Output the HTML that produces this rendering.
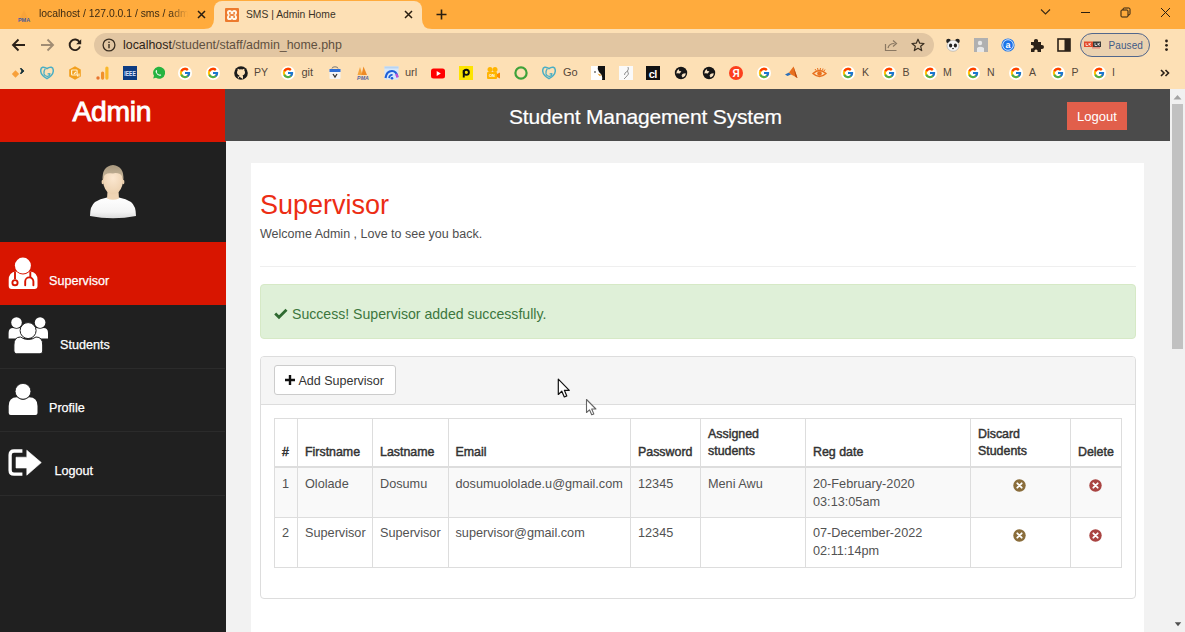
<!DOCTYPE html>
<html><head><meta charset="utf-8">
<style>
*{margin:0;padding:0;box-sizing:border-box}
html,body{width:1185px;height:632px;overflow:hidden;background:#f2f2f2;font-family:"Liberation Sans",sans-serif}
.a{position:absolute}
.t{position:absolute;white-space:nowrap;line-height:1}
#tabs{left:0;top:0;width:1185px;height:29px;background:#ffab3d}
#toolbar{left:0;top:29px;width:1185px;height:60px;background:#fde0b5}
#page{left:0;top:89px;width:1185px;height:543px;background:#f2f2f2}
.th{font-size:12.4px;color:#333;-webkit-text-stroke:0.45px #333}
.td{font-size:12.7px;color:#525252}
</style></head><body>
<!-- ===== browser chrome ===== -->
<div id="tabs" class="a"></div>
<div id="toolbar" class="a"></div>
<!-- active tab -->
<div class="a" style="left:214px;top:1px;width:208px;height:28px;background:#fde0b5;border-radius:8px 8px 0 0"></div>
<svg class="a" style="left:204px;top:19px" width="10" height="10"><path d="M0 10 Q10 10 10 0 L10 10 Z" fill="#fde0b5"/></svg>
<svg class="a" style="left:422px;top:19px" width="10" height="10"><path d="M10 10 Q0 10 0 0 L0 10 Z" fill="#fde0b5"/></svg>

<svg width="0" height="0" style="position:absolute"><defs>
<symbol id="gg" viewBox="0 0 48 48"><circle cx="24" cy="24" r="24" fill="#fff"/><g transform="translate(24 24) scale(0.88) translate(-24 -24)"><path fill="#FFC107" d="M43.611,20.083H42V20H24v8h11.303c-1.649,4.657-6.08,8-11.303,8c-6.627,0-12-5.373-12-12c0-6.627,5.373-12,12-12c3.059,0,5.842,1.154,7.961,3.039l5.657-5.657C34.046,6.053,29.268,4,24,4C12.955,4,4,12.955,4,24c0,11.045,8.955,20,20,20c11.045,0,20-8.955,20-20C44,22.659,43.862,21.35,43.611,20.083z"/><path fill="#FF3D00" d="M6.306,14.691l6.571,4.819C14.655,15.108,18.961,12,24,12c3.059,0,5.842,1.154,7.961,3.039l5.657-5.657C34.046,6.053,29.268,4,24,4C16.318,4,9.656,8.337,6.306,14.691z"/><path fill="#4CAF50" d="M24,44c5.166,0,9.86-1.977,13.409-5.192l-6.19-5.238C29.211,35.091,26.715,36,24,36c-5.202,0-9.619-3.317-11.283-7.946l-6.522,5.025C9.505,39.556,16.227,44,24,44z"/><path fill="#1976D2" d="M43.611,20.083H42V20H24v8h11.303c-0.792,2.237-2.231,4.166-4.087,5.571l6.19,5.238C36.971,39.205,44,34,44,24C44,22.659,43.862,21.35,43.611,20.083z"/></g></symbol>
<symbol id="globe" viewBox="0 0 14 14"><circle cx="7" cy="7" r="6.2" fill="#161616"/><path d="M2.3 7.4Q2.4 4.4 5 3.1L5.2 5L7.4 5.3L5.8 7.6Q4 7.2 2.3 7.4Z" fill="#f6e2c4"/><path d="M11.7 7.2Q11.6 10.4 8.6 11.5L7.4 9.6L8.6 8.9L7.8 8.2Q9.8 7.2 11.7 7.2Z" fill="#f6e2c4"/></symbol>
</defs></svg>
<!-- bookmarks -->
<svg class="a" style="left:11px;top:66px" width="15" height="14" viewBox="0 0 15 14"><path d="M0.8 8L4.5 4.3L8.2 8L4.5 11.7Z" fill="#f7a03a"/><path d="M8.8 2.2L10.2 2L13.2 5L10.2 8L8.8 7.8L10.5 5Z" fill="#16323a"/><path d="M10 2L13.2 5L10 8L11 5Z" fill="#16323a"/></svg>
<svg class="a" style="left:40px;top:66px" width="14" height="14" viewBox="0 0 14 14"><path d="M7 2.6Q9 1 11.3 1.3Q13.4 1.8 13.3 5Q13 9.3 7 12.6Q1 9.3 0.7 5Q0.6 1.8 2.7 1.3Q5 1 7 2.6Z" fill="none" stroke="#4aaec4" stroke-width="1.5"/><path d="M5.3 2.6Q3.3 5.2 4 8Q5 10.8 7.8 10.4Q9.9 10 9.8 7.6L7.6 7.8" fill="none" stroke="#4aaec4" stroke-width="1.3"/></svg>
<svg class="a" style="left:68px;top:66px" width="14" height="14" viewBox="0 0 14 14"><path d="M7 0.3L12.8 3.5V10.5L7 13.7L1.2 10.5V3.5Z" fill="#f29f1e"/><rect x="3.6" y="4" width="5.5" height="5" rx="0.8" fill="none" stroke="#fff3d0" stroke-width="1.2"/><path d="M6 8L8 6M9.5 8.5V10.5M11 7.5V10.5" stroke="#fff3d0" stroke-width="1.1"/></svg>
<svg class="a" style="left:96px;top:66px" width="13" height="14" viewBox="0 0 13 14"><circle cx="2" cy="12" r="1.7" fill="#e8742e"/><rect x="5" y="5.5" width="3.2" height="8.2" rx="1.6" fill="#f0912b"/><rect x="9.3" y="0.5" width="3.2" height="13.2" rx="1.6" fill="#f9b72a"/></svg>
<svg class="a" style="left:123px;top:66px" width="14" height="14" viewBox="0 0 14 14"><rect width="14" height="14" fill="#0e3c82"/><text x="1.3" y="10" font-size="7.5" font-weight="bold" font-family="Liberation Sans" fill="#dfe8ff" textLength="11.5" lengthAdjust="spacingAndGlyphs">IEEE</text></svg>
<svg class="a" style="left:151px;top:66px" width="14" height="14" viewBox="0 0 14 14"><path d="M2.2 12.6L3 9.8A6 6 0 1 1 5 11.8Z" fill="#25b340"/><path d="M5 4.2Q4.3 5 4.8 6.5Q6 9 8.8 9.8Q10 10 10.3 9L9 8.2L8.3 8.8Q6.3 8 5.6 6L6.2 5.3L5.6 4Z" fill="#fff"/></svg>
<svg class="a" style="left:178px;top:66px" width="14" height="14"><use href="#gg"/></svg>
<svg class="a" style="left:206px;top:66px" width="14" height="14"><use href="#gg"/></svg>
<svg class="a" style="left:234px;top:66px" width="14" height="14" viewBox="0 0 14 14"><circle cx="7" cy="7" r="6.8" fill="#1b1b1b"/><path d="M5 13V10.8Q3 10.8 2.8 9.5M9 13V10.5Q9 9.5 8.5 9.2Q11 9 11 6.3Q11 5.3 10.3 4.5Q10.6 3.5 10.2 2.8Q9.3 2.8 8.5 3.5Q7 3 5.5 3.5Q4.7 2.8 3.8 2.8Q3.4 3.5 3.7 4.5Q3 5.3 3 6.3Q3 9 5.5 9.2Q5 9.7 5 10.5" fill="#fde0b5"/></svg>
<div class="t" style="left:254px;top:67px;font-size:10.5px;color:#54473a">PY</div>
<svg class="a" style="left:281px;top:66px" width="14" height="14"><use href="#gg"/></svg>
<div class="t" style="left:301.5px;top:67px;font-size:11px;color:#54473a">git</div>
<svg class="a" style="left:328px;top:66px" width="14" height="14" viewBox="0 0 14 14"><path d="M4 2.5Q4 0.8 7 0.8Q10 0.8 10 2.5" fill="none" stroke="#777" stroke-width="1"/><rect x="1.5" y="3" width="11" height="10" rx="1" fill="#f4f4f4"/><rect x="1.5" y="3" width="11" height="3" fill="#2f6fd6"/><path d="M5 8L7 11L9 8" fill="none" stroke="#333" stroke-width="1.3"/></svg>
<svg class="a" style="left:355px;top:66px" width="16" height="14" viewBox="0 0 16 14"><path d="M5 1L7.5 9H2.5Z" fill="#f5a43d"/><path d="M8.5 0.5L12 9H6.5Z" fill="#ee8a24"/><text x="8" y="13.5" font-size="5.3" font-weight="bold" font-style="italic" font-family="Liberation Sans" fill="#54639c" text-anchor="middle">PMA</text></svg>
<svg class="a" style="left:384px;top:66px" width="15" height="14" viewBox="0 0 15 14"><rect x="0.5" y="0.5" width="14" height="13" fill="#d6e8fb"/><rect x="0.5" y="0.5" width="14" height="2" fill="#b8d4f3"/><path d="M1.5 12Q2.5 5 8 5Q12.5 5 13.5 11" fill="none" stroke="#1e5fd8" stroke-width="2.2"/><path d="M12 8Q13.2 9.5 13.5 11.5" fill="none" stroke="#c44fd6" stroke-width="2.2"/><path d="M5 12Q6 8.5 8.5 9" fill="none" stroke="#1e5fd8" stroke-width="1.8"/><circle cx="8" cy="12.3" r="1.3" fill="#1e5fd8"/></svg>
<div class="t" style="left:405px;top:67px;font-size:11px;color:#54473a">url</div>
<svg class="a" style="left:431px;top:66px" width="14" height="14" viewBox="0 0 14 14"><rect x="0" y="2.5" width="14" height="10" rx="2.5" fill="#f00"/><path d="M5.7 5V10L9.8 7.5Z" fill="#fff"/></svg>
<svg class="a" style="left:459px;top:66px" width="14" height="14" viewBox="0 0 14 14"><rect width="14" height="14" fill="#fde400"/><circle cx="7.3" cy="6.3" r="2.6" fill="none" stroke="#111" stroke-width="1.9"/><rect x="3.8" y="4" width="1.9" height="7.5" fill="#111"/></svg>
<svg class="a" style="left:486px;top:66px" width="14" height="14" viewBox="0 0 14 14"><circle cx="4" cy="3.5" r="2.5" fill="#ffb400"/><circle cx="9" cy="3.5" r="2.5" fill="#ffb400"/><rect x="1" y="6" width="10" height="7" rx="1" fill="#ffb400"/><path d="M11 8L14 6.5V12.5L11 11Z" fill="#ff8a00"/><text x="6" y="11.3" font-size="4" font-family="Liberation Sans" font-weight="bold" fill="#fff" text-anchor="middle">ON</text></svg>
<svg class="a" style="left:514px;top:66px" width="14" height="14" viewBox="0 0 14 14"><circle cx="7" cy="7" r="5.6" fill="none" stroke="#3ea23a" stroke-width="2.2"/></svg>
<svg class="a" style="left:542px;top:66px" width="14" height="14" viewBox="0 0 14 14"><path d="M7 2.6Q9 1 11.3 1.3Q13.4 1.8 13.3 5Q13 9.3 7 12.6Q1 9.3 0.7 5Q0.6 1.8 2.7 1.3Q5 1 7 2.6Z" fill="none" stroke="#4aaec4" stroke-width="1.5"/><path d="M5.3 2.6Q3.3 5.2 4 8Q5 10.8 7.8 10.4Q9.9 10 9.8 7.6L7.6 7.8" fill="none" stroke="#4aaec4" stroke-width="1.3"/></svg>
<div class="t" style="left:563px;top:67px;font-size:11px;color:#54473a">Go</div>
<svg class="a" style="left:591px;top:66px" width="14" height="14" viewBox="0 0 14 14"><rect width="14" height="14" fill="#fff"/><path d="M7 0H14V14H11Q12 9 8 6Q6 3 7 0Z" fill="#111"/><path d="M6.5 7.5L11 9L8.5 10Z" fill="#e8a030"/><circle cx="4" cy="6" r="0.8" fill="#111"/></svg>
<svg class="a" style="left:619px;top:66px" width="14" height="14" viewBox="0 0 14 14"><rect width="14" height="14" fill="#fafafa"/><path d="M9 1Q10 3 8.5 5L9.5 8L7 11L5 13M8.5 5L6 7L5.5 9" fill="none" stroke="#777" stroke-width="0.8"/></svg>
<svg class="a" style="left:646px;top:66px" width="14" height="14" viewBox="0 0 14 14"><rect width="14" height="14" fill="#111"/><text x="6.8" y="11.5" font-size="11" font-weight="bold" font-family="Liberation Sans" fill="#fff" text-anchor="middle" letter-spacing="-0.5">cl</text></svg>
<svg class="a" style="left:674px;top:66px" width="14" height="14"><use href="#globe"/></svg>
<svg class="a" style="left:702px;top:66px" width="14" height="14"><use href="#globe"/></svg>
<svg class="a" style="left:729px;top:66px" width="14" height="14" viewBox="0 0 14 14"><circle cx="7" cy="7" r="7" fill="#fc3f1d"/><text x="7" y="11" font-size="10" font-weight="bold" font-family="Liberation Sans" fill="#fff" text-anchor="middle">Я</text></svg>
<svg class="a" style="left:757px;top:66px" width="14" height="14"><use href="#gg"/></svg>
<svg class="a" style="left:784px;top:66px" width="14" height="14" viewBox="0 0 14 14"><path d="M1 8.5L5 6.5L7 8.5L3.5 10Z" fill="#2c6fb8"/><path d="M5 6.5L9.5 0.5L13.5 12L10 10L7 8.5Z" fill="#e8701e"/><path d="M9.5 0.5L13.5 12L11.5 11Z" fill="#b84a10"/></svg>
<svg class="a" style="left:812px;top:66px" width="15" height="14" viewBox="0 0 15 14"><path d="M1 7.5Q7.5 1.5 14 7.5Q7.5 13.5 1 7.5Z" fill="none" stroke="#e8701e" stroke-width="1.5"/><circle cx="7.5" cy="7.5" r="2.3" fill="#e8701e"/><path d="M3 3L4 4.5M5.5 2L6 4M8.5 2L8.2 4M11 2.5L10.5 4.2M13 3.5L12 5" stroke="#e8701e" stroke-width="1"/></svg>
<svg class="a" style="left:841px;top:66px" width="14" height="14"><use href="#gg"/></svg>
<div class="t" style="left:862px;top:67px;font-size:10.5px;color:#54473a">K</div>
<svg class="a" style="left:882px;top:66px" width="14" height="14"><use href="#gg"/></svg>
<div class="t" style="left:902.6px;top:67px;font-size:10.5px;color:#54473a">B</div>
<svg class="a" style="left:922.5px;top:66px" width="14" height="14"><use href="#gg"/></svg>
<div class="t" style="left:943px;top:67px;font-size:10.5px;color:#54473a">M</div>
<svg class="a" style="left:966px;top:66px" width="14" height="14"><use href="#gg"/></svg>
<div class="t" style="left:987px;top:67px;font-size:10.5px;color:#54473a">N</div>
<svg class="a" style="left:1008.5px;top:66px" width="14" height="14"><use href="#gg"/></svg>
<div class="t" style="left:1029px;top:67px;font-size:10.5px;color:#54473a">A</div>
<svg class="a" style="left:1050.5px;top:66px" width="14" height="14"><use href="#gg"/></svg>
<div class="t" style="left:1071.4px;top:67px;font-size:10.5px;color:#54473a">P</div>
<svg class="a" style="left:1091.5px;top:66px" width="14" height="14"><use href="#gg"/></svg>
<div class="t" style="left:1112px;top:67px;font-size:10.5px;color:#54473a">I</div>
<svg class="a" style="left:1160px;top:69px" width="10" height="8" viewBox="0 0 10 8"><path d="M1 1L4 4L1 7M5.5 1L8.5 4L5.5 7" fill="none" stroke="#2b2118" stroke-width="1.6"/></svg>
<!-- tab 1 -->
<svg class="a" style="left:16px;top:9px" width="16" height="14" viewBox="0 0 16 14"><path d="M8 1 L12 9 L4 9Z" fill="#f7a23a" opacity="0.8"/><text x="8" y="12.5" font-size="5.5" font-weight="bold" font-family="Liberation Sans" fill="#4a5a9a" text-anchor="middle">PMA</text></svg>
<div class="t" style="left:39px;top:9px;font-size:10.4px;color:#3b2a14;width:152px;overflow:hidden;-webkit-mask-image:linear-gradient(90deg,#000 86%,transparent 98%)">localhost / 127.0.0.1 / sms / admin</div>
<svg class="a" style="left:197px;top:10px" width="9" height="9" viewBox="0 0 9 9"><path d="M1 1L8 8M8 1L1 8" stroke="#2a1e10" stroke-width="1.5"/></svg>
<!-- tab 2 icon -->
<svg class="a" style="left:225px;top:8px" width="14" height="14" viewBox="0 0 14 14"><rect x="0" y="0" width="14" height="14" rx="1" fill="#ec7a2e"/><g fill="#fff8e8"><circle cx="4.6" cy="4.6" r="2.6"/><circle cx="9.4" cy="4.6" r="2.6"/><circle cx="4.6" cy="9.4" r="2.6"/><circle cx="9.4" cy="9.4" r="2.6"/></g><g fill="#ec7a2e"><circle cx="4.9" cy="4.9" r="1"/><circle cx="9.1" cy="4.9" r="1"/><circle cx="4.9" cy="9.1" r="1"/><circle cx="9.1" cy="9.1" r="1"/><rect x="4.5" y="6.2" width="5" height="1.6"/></g></svg>
<div class="t" style="left:246px;top:10px;font-size:10.3px;color:#3b3226">SMS | Admin Home</div>
<svg class="a" style="left:404px;top:10px" width="9" height="9" viewBox="0 0 9 9"><path d="M1 1L8 8M8 1L1 8" stroke="#2a1e10" stroke-width="1.5"/></svg>
<svg class="a" style="left:436px;top:9px" width="11" height="11" viewBox="0 0 11 11"><path d="M5.5 0.5V10.5M0.5 5.5H10.5" stroke="#2a1e10" stroke-width="1.6"/></svg>
<!-- window controls -->
<svg class="a" style="left:1040px;top:8px" width="11" height="8" viewBox="0 0 11 8"><path d="M1 1.5L5.5 6L10 1.5" fill="none" stroke="#3a2a14" stroke-width="1.1"/></svg>
<div class="a" style="left:1081px;top:12px;width:9px;height:1px;background:#2a1e10"></div>
<svg class="a" style="left:1120px;top:7px" width="11" height="11" viewBox="0 0 11 11"><rect x="1" y="3" width="7" height="7" rx="1" fill="none" stroke="#2a1e10" stroke-width="1"/><path d="M3 3V2.2Q3 1 4.2 1H8.8Q10 1 10 2.2V6.8Q10 8 8.8 8H8" fill="none" stroke="#2a1e10" stroke-width="1"/></svg>
<svg class="a" style="left:1160px;top:7px" width="11" height="11" viewBox="0 0 11 11"><path d="M1 1L10 10M10 1L1 10" stroke="#2a1e10" stroke-width="1"/></svg>
<!-- nav -->
<svg class="a" style="left:11px;top:38px" width="15" height="14" viewBox="0 0 15 14"><path d="M14 7H2.5M7.5 1.5L2 7L7.5 12.5" fill="none" stroke="#2b2118" stroke-width="1.9"/></svg>
<svg class="a" style="left:40px;top:38px" width="15" height="14" viewBox="0 0 15 14"><path d="M1 7H12.5M7.5 1.5L13 7L7.5 12.5" fill="none" stroke="#a08c73" stroke-width="1.9"/></svg>
<svg class="a" style="left:67px;top:38px" width="16" height="14" viewBox="0 0 16 14"><path d="M12.6 4.2 A5.3 5.3 0 1 0 13 8.5" fill="none" stroke="#2b2118" stroke-width="1.9"/><path d="M14.2 1.2V6.2H9.2Z" fill="#2b2118"/></svg>
<!-- omnibox -->
<div class="a" style="left:94px;top:33px;width:840px;height:24px;background:#e2c6a2;border-radius:12px"></div>
<svg class="a" style="left:102px;top:38px" width="14" height="14" viewBox="0 0 14 14"><circle cx="7" cy="7" r="5.9" fill="none" stroke="#3a2e20" stroke-width="1.3"/><rect x="6.3" y="6" width="1.4" height="4.3" fill="#3a2e20"/><rect x="6.3" y="3.6" width="1.4" height="1.4" fill="#3a2e20"/></svg>
<div class="t" style="left:123px;top:39px;font-size:12.4px;color:#5f5040"><span style="color:#2e2317">localhost</span>/student/staff/admin_home.php</div>
<svg class="a" style="left:884px;top:38px" width="14" height="14" viewBox="0 0 14 14"><path d="M1.5 6V12.5H12.5" fill="none" stroke="#8a7862" stroke-width="1.2"/><path d="M4 10Q5 5.5 10.5 5.5" fill="none" stroke="#8a7862" stroke-width="1.2"/><path d="M9 2.5L12.5 5.5L9 8.5" fill="none" stroke="#8a7862" stroke-width="1.2"/></svg>
<svg class="a" style="left:911px;top:38px" width="14" height="14" viewBox="0 0 14 14"><path d="M7 1.2L8.7 5.2L13 5.5L9.7 8.3L10.7 12.6L7 10.3L3.3 12.6L4.3 8.3L1 5.5L5.3 5.2Z" fill="none" stroke="#3a2e20" stroke-width="1.2" stroke-linejoin="round"/></svg>
<!-- extensions -->
<svg class="a" style="left:946px;top:38px" width="14" height="14" viewBox="0 0 14 14"><circle cx="2.5" cy="3" r="2.3" fill="#222"/><circle cx="11.5" cy="3" r="2.3" fill="#222"/><ellipse cx="7" cy="7.8" rx="6" ry="5.5" fill="#f4f4f4" stroke="#999" stroke-width="0.5"/><ellipse cx="4.6" cy="7.5" rx="1.6" ry="2" fill="#222"/><ellipse cx="9.4" cy="7.5" rx="1.6" ry="2" fill="#222"/><ellipse cx="7" cy="10.6" rx="1" ry="0.7" fill="#222"/></svg>
<svg class="a" style="left:974px;top:38px" width="14" height="14" viewBox="0 0 14 14"><rect width="14" height="14" fill="#b0b0b0"/><circle cx="6" cy="5" r="2.2" fill="#e8e8e8"/><path d="M3 14V10Q6 7.5 10 10V14Z" fill="#e8e8e8"/></svg>
<svg class="a" style="left:1001px;top:38px" width="14" height="14" viewBox="0 0 14 14"><circle cx="7" cy="7" r="6.6" fill="#1a73e8"/><circle cx="7" cy="7" r="5.3" fill="none" stroke="#fff" stroke-width="0.8"/><text x="7" y="10.3" font-size="9" font-weight="bold" font-family="Liberation Sans" fill="#fff" text-anchor="middle">a</text></svg>
<svg class="a" style="left:1029px;top:38px" width="15" height="14" viewBox="0 0 15 14"><path d="M2 4H5Q4.5 1 7 1Q9.5 1 9 4H12V7Q15 6.5 15 9Q15 11.5 12 11V14H8.5Q9 11.5 7 11.5Q5 11.5 5.5 14H2V10.5Q4.8 11 4.8 8.8Q4.8 6.6 2 7Z" fill="#2b2118"/></svg>
<svg class="a" style="left:1057px;top:38px" width="14" height="14" viewBox="0 0 14 14"><rect x="1" y="1" width="12" height="12" fill="none" stroke="#2b2118" stroke-width="1.6"/><rect x="7.5" y="1" width="5.5" height="12" fill="#2b2118"/></svg>
<div class="a" style="left:1080px;top:33px;width:70px;height:24px;border:1.8px solid #52678c;border-radius:12px;background:#ebd2b0"></div>
<svg class="a" style="left:1084px;top:41px" width="18" height="8" viewBox="0 0 18 8"><rect x="0" y="0.5" width="9" height="5.5" fill="#e24a2a"/><rect x="9" y="0.5" width="8" height="5.5" fill="#3a3a3a"/><path d="M2 2V4.5H4M5 2V4.5M5 3.3L7 2M5 3.3L7 4.5M11 2V4.5H13M14 2V4.5M14 3.3L16 2M14 3.3L16 4.5" stroke="#fff" stroke-width="0.7" fill="none"/><rect x="8" y="6.5" width="8" height="0.8" fill="#d55"/></svg>
<div class="t" style="left:1108.5px;top:40.5px;font-size:10px;color:#3f5a86;letter-spacing:0.1px">Paused</div>
<svg class="a" style="left:1164px;top:39px" width="5" height="13" viewBox="0 0 5 13"><circle cx="2.5" cy="2" r="1.4" fill="#2b2118"/><circle cx="2.5" cy="6.3" r="1.4" fill="#2b2118"/><circle cx="2.5" cy="10.6" r="1.4" fill="#2b2118"/></svg>



<div id="page" class="a"></div>
<!-- sidebar -->
<div class="a" style="left:0;top:89px;width:225.5px;height:543px;background:#202020"></div>
<div class="a" style="left:0;top:89px;width:225.5px;height:52.7px;background:#d81500"></div>
<div class="t" style="left:72.5px;top:97px;font-size:28.3px;color:#fff;-webkit-text-stroke:0.9px #fff;letter-spacing:-0.3px">Admin</div>
<div class="a" style="left:0;top:241.5px;width:225.5px;height:63.4px;background:#d81500"></div>
<div class="a" style="left:0;top:368px;width:225px;height:1px;background:#2b2b2b"></div>
<div class="a" style="left:0;top:431px;width:225px;height:1px;background:#2b2b2b"></div>
<div class="a" style="left:0;top:495px;width:225px;height:1px;background:#2b2b2b"></div>
<div class="t" style="left:49px;top:274.5px;font-size:12.6px;color:#fff;-webkit-text-stroke:0.25px #fff">Supervisor</div>
<div class="t" style="left:60px;top:338.5px;font-size:12.6px;color:#fff;-webkit-text-stroke:0.25px #fff">Students</div>
<div class="t" style="left:49px;top:401.5px;font-size:12.6px;color:#fff;-webkit-text-stroke:0.25px #fff">Profile</div>
<div class="t" style="left:54.5px;top:465px;font-size:12.6px;color:#fff;-webkit-text-stroke:0.25px #fff">Logout</div>
<!-- header -->
<div class="a" style="left:225px;top:89px;width:945px;height:52px;background:#4b4b4b"></div>
<div class="t" style="left:509px;top:106px;font-size:21px;color:#fff;letter-spacing:-0.15px;-webkit-text-stroke:0.2px #fff">Student Management System</div>
<div class="a" style="left:1067px;top:102px;width:60px;height:28px;background:#e15f4b"></div>
<div class="t" style="left:1077px;top:110px;font-size:13px;color:#fff">Logout</div>
<!-- scrollbar -->
<div class="a" style="left:1170px;top:89px;width:15px;height:543px;background:#f1f1f1"></div>
<div class="a" style="left:1172px;top:104px;width:11px;height:245px;background:#c1c1c1"></div>
<!-- white panel -->
<div class="a" style="left:251px;top:163px;width:893px;height:469px;background:#fff"></div>
<div class="t" style="left:260px;top:191.7px;font-size:27px;color:#ec2d14">Supervisor</div>
<div class="t" style="left:260px;top:227.5px;font-size:12.5px;color:#4e4e4e">Welcome Admin , Love to see you back.</div>
<div class="a" style="left:260px;top:265.5px;width:876px;height:1px;background:#efefef"></div>
<!-- alert -->
<div class="a" style="left:260px;top:284px;width:876px;height:55px;background:#dff0d8;border:1px solid #d6e9c6;border-radius:4px"></div>
<div class="t" style="left:292px;top:307px;font-size:14.1px;color:#3c763d">Success! Supervisor added successfully.</div>
<!-- panel -->
<div class="a" style="left:260px;top:356px;width:876px;height:243px;background:#fff;border:1px solid #ddd;border-radius:4px;overflow:hidden">
  <div class="a" style="left:0;top:0;width:874px;height:48px;background:#f5f5f5;border-bottom:1px solid #ddd"></div>
</div>
<div class="a" style="left:274px;top:365px;width:122px;height:30px;background:#fff;border:1px solid #ccc;border-radius:3px"></div>
<div class="t" style="left:298.5px;top:374.5px;font-size:12.5px;color:#333">Add Supervisor</div>
<!-- table -->
<div class="a" style="left:274px;top:418px;width:848px;height:150px;border:1px solid #ddd"></div>
<div class="a" style="left:275px;top:468px;width:846px;height:49px;background:#f9f9f9"></div>
<div class="a" style="left:274px;top:466px;width:848px;height:2px;background:#ddd"></div>
<div class="a" style="left:274px;top:517px;width:848px;height:1px;background:#ddd"></div>
<div class="a" style="left:297px;top:418px;width:1px;height:150px;background:#ddd"></div>
<div class="a" style="left:372px;top:418px;width:1px;height:150px;background:#ddd"></div>
<div class="a" style="left:448px;top:418px;width:1px;height:150px;background:#ddd"></div>
<div class="a" style="left:630px;top:418px;width:1px;height:150px;background:#ddd"></div>
<div class="a" style="left:700px;top:418px;width:1px;height:150px;background:#ddd"></div>
<div class="a" style="left:805px;top:418px;width:1px;height:150px;background:#ddd"></div>
<div class="a" style="left:970px;top:418px;width:1px;height:150px;background:#ddd"></div>
<div class="a" style="left:1070px;top:418px;width:1px;height:150px;background:#ddd"></div>
<div class="t th" style="left:282px;top:446px">#</div>
<div class="t th" style="left:305px;top:446px">Firstname</div>
<div class="t th" style="left:380px;top:446px">Lastname</div>
<div class="t th" style="left:455.5px;top:446px">Email</div>
<div class="t th" style="left:638px;top:446px">Password</div>
<div class="t th" style="left:813px;top:446px">Reg date</div>
<div class="t th" style="left:1078px;top:446px">Delete</div>
<div class="t th" style="left:708px;top:428px">Assigned</div>
<div class="t th" style="left:708px;top:445px">students</div>
<div class="t th" style="left:978px;top:428px">Discard</div>
<div class="t th" style="left:978px;top:445px">Students</div>
<div class="t td" style="left:282px;top:478px">1</div>
<div class="t td" style="left:305px;top:478px">Ololade</div>
<div class="t td" style="left:380px;top:478px">Dosumu</div>
<div class="t td" style="left:455.5px;top:478px">dosumuololade.u@gmail.com</div>
<div class="t td" style="left:638px;top:478px">12345</div>
<div class="t td" style="left:708px;top:478px">Meni Awu</div>
<div class="t td" style="left:813px;top:478px">20-February-2020</div>
<div class="t td" style="left:813px;top:496.3px">03:13:05am</div>
<div class="t td" style="left:282px;top:527px">2</div>
<div class="t td" style="left:305px;top:527px">Supervisor</div>
<div class="t td" style="left:380px;top:527px">Supervisor</div>
<div class="t td" style="left:455.5px;top:527px">supervisor@gmail.com</div>
<div class="t td" style="left:638px;top:527px">12345</div>
<div class="t td" style="left:813px;top:527px">07-December-2022</div>
<div class="t td" style="left:813px;top:545.3px">02:11:14pm</div>
<svg class="a" style="left:1013.3px;top:479px" width="13" height="13" viewBox="0 0 13 13"><circle cx="6.5" cy="6.5" r="6.2" fill="#8a6d3b"/><path d="M4.3 4.3L8.7 8.7M8.7 4.3L4.3 8.7" stroke="#fff" stroke-width="1.8" stroke-linecap="round"/></svg>
<svg class="a" style="left:1089.3px;top:479px" width="13" height="13" viewBox="0 0 13 13"><circle cx="6.5" cy="6.5" r="6.2" fill="#a94442"/><path d="M4.3 4.3L8.7 8.7M8.7 4.3L4.3 8.7" stroke="#fff" stroke-width="1.8" stroke-linecap="round"/></svg>
<svg class="a" style="left:1013.3px;top:528.5px" width="13" height="13" viewBox="0 0 13 13"><circle cx="6.5" cy="6.5" r="6.2" fill="#8a6d3b"/><path d="M4.3 4.3L8.7 8.7M8.7 4.3L4.3 8.7" stroke="#fff" stroke-width="1.8" stroke-linecap="round"/></svg>
<svg class="a" style="left:1089.3px;top:528.5px" width="13" height="13" viewBox="0 0 13 13"><circle cx="6.5" cy="6.5" r="6.2" fill="#a94442"/><path d="M4.3 4.3L8.7 8.7M8.7 4.3L4.3 8.7" stroke="#fff" stroke-width="1.8" stroke-linecap="round"/></svg>

<!-- avatar -->
<svg class="a" style="left:86px;top:160px" width="54" height="62" viewBox="0 0 54 62">
<defs><radialGradient id="skin" cx="50%" cy="35%" r="65%"><stop offset="0" stop-color="#fbe7d0"/><stop offset="1" stop-color="#ecd0ae"/></radialGradient>
<linearGradient id="shirt" x1="0" y1="0" x2="0" y2="1"><stop offset="0" stop-color="#ffffff"/><stop offset="0.7" stop-color="#f4f4f4"/><stop offset="1" stop-color="#dcdcdc"/></linearGradient>
<linearGradient id="hair" x1="0" y1="0" x2="0" y2="1"><stop offset="0" stop-color="#a9997f"/><stop offset="1" stop-color="#cdbb9f"/></linearGradient></defs>
<path d="M4 56 Q4 46 9 42 Q14 38.5 21 37.5 Q27 40.5 33 37.5 Q40 38.5 45 42 Q50 46 50 56 Q27 60.5 4 56Z" fill="url(#shirt)"/>
<path d="M21.5 31 L32.5 31 L33 38.5 Q27 41 21 38.5Z" fill="#efd4b4"/>
<path d="M17 20 Q17 9 27 9 Q37 9 37 20 Q37 27 33 31.5 Q30 34.5 27 34.5 Q24 34.5 21 31.5 Q17 27 17 20Z" fill="url(#skin)"/>
<ellipse cx="16.8" cy="22" rx="1.2" ry="2.3" fill="#ecd0ae"/><ellipse cx="37.2" cy="22" rx="1.2" ry="2.3" fill="#ecd0ae"/>
<path d="M16.6 21 Q15.5 6 27 5 Q38.5 6 37.4 21 Q36.5 15.5 34 14 Q30 12.5 27 13.5 Q22 12.5 19.5 14.5 Q17.2 16 16.6 21Z" fill="url(#hair)"/>
</svg>
<!-- user-md -->
<svg class="a" style="left:4px;top:252.5px" width="40" height="40" viewBox="0 0 40 40">
<path d="M4.7 27 Q4.7 19 12 18.4 Q16 21.5 19 21.5 Q22 21.5 26 18.4 Q33.5 19 33.5 27 V33 Q33.5 36 30.5 36 H7.7 Q4.7 36 4.7 33Z" fill="#fff"/>
<circle cx="18.9" cy="12.6" r="8" fill="#fff"/>
<path d="M11 18.8 V26.3 M26.3 18.8 V24.7" stroke="#d81500" stroke-width="1.9"/>
<circle cx="11" cy="29.7" r="2.6" fill="none" stroke="#d81500" stroke-width="1.9"/>
<path d="M21.2 32.3 V28.5 A4.1 4.1 0 0 1 29.4 28.5 V32.3" fill="none" stroke="#d81500" stroke-width="1.9" stroke-linecap="round"/>
</svg>
<!-- users -->
<svg class="a" style="left:4px;top:312px" width="48" height="48" viewBox="0 0 48 48">
<circle cx="12.5" cy="10.6" r="5.3" fill="#fff"/><circle cx="36.1" cy="10.6" r="5.3" fill="#fff"/>
<path d="M4.6 21 Q4.6 16 9 16 Q12.5 17.5 16 16 Q20 16 20 21 V26.6 H4.6Z" fill="#fff"/>
<path d="M28 21 Q28 16 32.5 16 Q36 17.5 39.5 16 Q44 16 44 21 V26.6 H28Z" fill="#fff"/>
<path d="M9.9 33 Q9.9 25 16.5 25 Q20 27.5 24.3 27.5 Q28.5 27.5 32 25 Q38.7 25 38.7 33 V39 Q38.7 41.8 36 41.8 H12.7 Q9.9 41.8 9.9 39Z" fill="#fff" stroke="#202020" stroke-width="1"/>
<circle cx="24.1" cy="18.6" r="8" fill="#fff" stroke="#202020" stroke-width="1"/>
</svg>
<!-- user -->
<svg class="a" style="left:4px;top:378px" width="40" height="40" viewBox="0 0 40 40">
<path d="M4.7 28 Q4.7 19.3 13 19.3 Q16 22 19 22 Q22 22 25 19.3 Q33.5 19.3 33.5 28 V35 Q33.5 37 31.5 37 H6.7 Q4.7 37 4.7 35Z" fill="#fff"/>
<circle cx="19" cy="13.3" r="7.9" fill="#fff" stroke="#202020" stroke-width="0.8"/>
</svg>
<!-- sign-out -->
<svg class="a" style="left:4px;top:443px" width="44" height="40" viewBox="0 0 44 40">
<path d="M18.4 8 H10 Q6.1 8 6.1 11.9 V27.3 Q6.1 31.2 10 31.2 H18.4" fill="none" stroke="#fff" stroke-width="3.3"/>
<path d="M12 14.2 H22.8 V7.2 L37.3 19.6 L22.8 32.2 V25 H12Z" fill="#fff" stroke="#fff" stroke-width="0.6" stroke-linejoin="round"/>
</svg>
<!-- check -->
<svg class="a" style="left:274px;top:308px" width="14" height="12" viewBox="0 0 14 12"><path d="M1.2 5.5 L5 9.3 L12.5 1.8" fill="none" stroke="#2f6a31" stroke-width="2.8"/></svg>
<!-- plus -->
<svg class="a" style="left:285px;top:375px" width="10" height="10" viewBox="0 0 10 10"><path d="M5 0V10M0 5H10" stroke="#111" stroke-width="2.4"/></svg>
<!-- scrollbar arrows -->
<svg class="a" style="left:1173px;top:94px" width="9" height="6" viewBox="0 0 9 6"><path d="M0.5 5.5L4.5 1L8.5 5.5Z" fill="#a3a3a3"/></svg>
<svg class="a" style="left:1173.5px;top:621.5px" width="8" height="5" viewBox="0 0 8 5"><path d="M0.8 0.3L4 4.3L7.2 0.3Z" fill="#505050"/></svg>
<!-- cursors -->
<svg class="a" style="left:557px;top:378px" width="14" height="21" viewBox="0 0 14 21"><path d="M1.3 1.2 V16.5 L4.8 13.2 L7.3 19 L9.8 17.9 L7.4 12.3 L12.3 12.3Z" fill="#fff" stroke="#111" stroke-width="1.2" stroke-linejoin="round"/></svg>
<svg class="a" style="left:585px;top:398px" width="13" height="19" viewBox="0 0 13 19"><path d="M1.5 1.5 V14.5 L4.5 11.8 L6.7 16.8 L8.8 15.9 L6.7 11 L10.9 11Z" fill="#fff" stroke="#666" stroke-width="1.1" stroke-linejoin="round"/></svg>
</body></html>
